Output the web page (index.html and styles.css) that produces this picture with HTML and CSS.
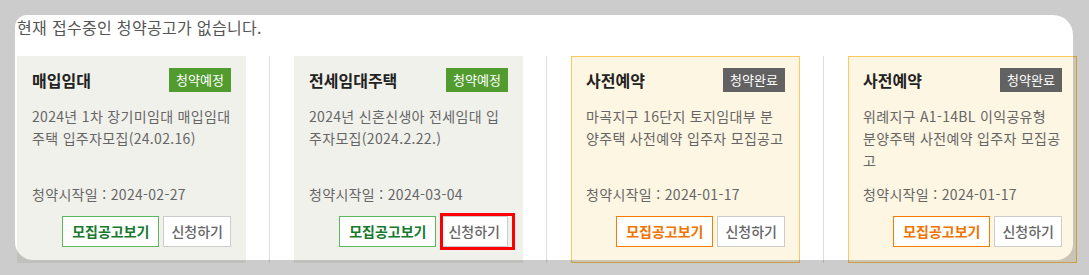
FILE: index.html
```html
<!DOCTYPE html>
<html lang="ko">
<head>
  <meta charset="utf-8">
  <title>청약공고</title>
  <link rel="stylesheet" href="styles.css">
</head>
<body>
  <div class="notice-wrap">
    <p class="empty-msg">현재 접수중인 청약공고가 없습니다.</p>

    <ul class="notice-list">
      <li class="notice-col">
        <div class="notice-card">
          <div class="card-head">
            <strong class="card-title">매입임대</strong>
            <span class="state-badge plan">청약예정</span>
          </div>
          <p class="card-desc">2024년 1차 장기미임대 매입임대 주택 입주자모집(24.02.16)</p>
          <p class="card-date">청약시작일 : 2024-02-27</p>
          <div class="card-btns">
            <a class="btn btn-view" href="#">모집공고보기</a>
            <a class="btn btn-apply" href="#">신청하기</a>
          </div>
        </div>
      </li>
      <li class="notice-col">
        <div class="notice-card">
          <div class="card-head">
            <strong class="card-title">전세임대주택</strong>
            <span class="state-badge plan">청약예정</span>
          </div>
          <p class="card-desc">2024년 신혼신생아 전세임대 입주자모집(2024.2.22.)</p>
          <p class="card-date">청약시작일 : 2024-03-04</p>
          <div class="card-btns">
            <a class="btn btn-view" href="#">모집공고보기</a>
            <a class="btn btn-apply marked" href="#">신청하기</a>
          </div>
        </div>
      </li>
      <li class="notice-col">
        <div class="notice-card done">
          <div class="card-head">
            <strong class="card-title">사전예약</strong>
            <span class="state-badge end">청약완료</span>
          </div>
          <p class="card-desc">마곡지구 16단지 토지임대부 분양주택 사전예약 입주자 모집공고</p>
          <p class="card-date">청약시작일 : 2024-01-17</p>
          <div class="card-btns">
            <a class="btn btn-view" href="#">모집공고보기</a>
            <a class="btn btn-apply" href="#">신청하기</a>
          </div>
        </div>
      </li>
      <li class="notice-col">
        <div class="notice-card done">
          <div class="card-head">
            <strong class="card-title">사전예약</strong>
            <span class="state-badge end">청약완료</span>
          </div>
          <p class="card-desc">위례지구 A1-14BL 이익공유형 분양주택 사전예약 입주자 모집공고</p>
          <p class="card-date">청약시작일 : 2024-01-17</p>
          <div class="card-btns">
            <a class="btn btn-view" href="#">모집공고보기</a>
            <a class="btn btn-apply" href="#">신청하기</a>
          </div>
        </div>
      </li>
    </ul>
  </div>

  <!-- tour spotlight over the section -->
  <div class="spotlight"></div>
</body>
</html>
```

FILE: styles.css
```css
html, body {
  margin: 0;
  padding: 0;
  overflow: hidden;
  background-color: #fff;
}

body {
  font-family: "Noto Sans CJK KR", "Noto Sans", sans-serif;
  color: #666;
  letter-spacing: 0.02em;
}

.notice-wrap {
  padding: 15px 0 0 17px;
}

.empty-msg {
  margin: 0;
  font-size: 16px;
  line-height: 24px;
  color: #555;
}

.notice-list {
  display: flex;
  list-style: none;
  margin: 17px 0 0;
  padding: 0;
}

.notice-col {
  flex: none;
  padding: 0 23px 0 24px;
  border-left: 1px solid #ddd;
}

.notice-col:first-child {
  padding-left: 0;
  border-left: none;
}

.notice-card {
  box-sizing: border-box;
  width: 229px;
  padding: 11px 14px 15px;
  border: 1px solid #f1f1ec;
  background-color: #f1f1ec;
}

.notice-card.done {
  background-color: #fdf6e2;
  border-color: #f9c95b;
}

.card-head {
  display: flex;
  justify-content: space-between;
  align-items: center;
  height: 24px;
}

.card-title {
  font-size: 16px;
  font-weight: bold;
  color: #222;
  letter-spacing: 0;
}

.state-badge {
  display: inline-block;
  width: 62px;
  height: 24px;
  line-height: 24px;
  text-align: center;
  font-size: 13px;
  color: #fff;
  letter-spacing: 0;
}

.state-badge.plan {
  background-color: #529b2f;
}

.state-badge.end {
  background-color: #626262;
}

.card-desc {
  margin: 13px 0 0;
  min-height: 66px;
  font-size: 14px;
  line-height: 22px;
}

.card-date {
  margin: 12px 0 0;
  font-size: 14px;
  line-height: 22px;
}

.card-btns {
  display: flex;
  justify-content: flex-end;
  gap: 4px;
  margin-top: 11px;
}

.btn {
  position: relative;
  box-sizing: border-box;
  height: 31px;
  line-height: 29px;
  padding: 0 9px;
  font-size: 14px;
  letter-spacing: 0;
  text-decoration: none;
  background-color: #fff;
  border: 1px solid #ccc;
}

.btn-view {
  border-color: #5cb85c;
  color: #17792c;
  font-weight: bold;
}

.done .btn-view {
  border-color: #f57c00;
  color: #f07400;
}

.btn-apply {
  padding: 0 7px;
  color: #666;
  font-weight: 500;
}

/* red annotation box */
.btn.marked::after {
  content: "";
  position: absolute;
  top: -4px;
  left: -1px;
  right: -8px;
  bottom: -4px;
  border: 3px solid #f00;
}

.spotlight {
  position: absolute;
  left: 15px;
  top: 15px;
  width: 1058px;
  height: 245px;
  border-radius: 12px 20px 16px 18px;
  box-shadow: 0 0 0 2000px rgba(0, 0, 0, 0.2);
  pointer-events: none;
}
```
